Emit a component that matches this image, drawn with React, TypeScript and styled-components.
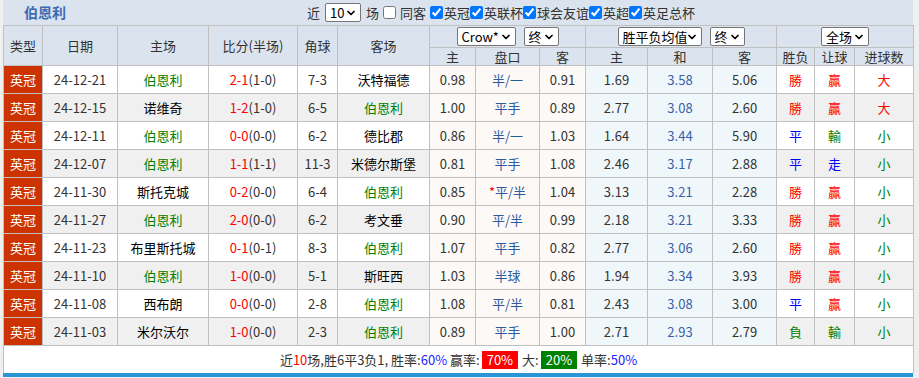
import React from "react";
import styled, { createGlobalStyle } from "styled-components";
import { ChevronDown } from "lucide-react";

const GlobalStyle = createGlobalStyle`
  html, body {
    margin: 0;
    padding: 0;
    background: #efefef;
  }
  body {
    font-family: "Noto Sans CJK SC", "Liberation Sans", sans-serif;
    font-size: 13px;
    color: #333;
  }
`;

const Panel = styled.div`
  width: 910px;
  margin-left: 3px;
  background: #dbe4ee;
`;

const TitleBar = styled.div`
  display: flex;
  align-items: center;
  height: 25px;
  padding-left: 21px;
`;

const Title = styled.div`
  width: 283px;
  font-size: 14px;
  font-weight: bold;
  color: #3c69b2;
  line-height: 25px;
`;

const Filters = styled.div`
  display: flex;
  align-items: center;
  font-size: 13px;
  color: #333;
  white-space: nowrap;
`;

const Check = styled.input.attrs({ type: "checkbox" })<{ $gap?: number }>`
  width: 13px;
  height: 13px;
  margin: 0 1px 0 ${(p) => p.$gap ?? 0}px;
`;

const SelectWrap = styled.span<{ $gap?: number }>`
  position: relative;
  display: inline-flex;
  margin: 0 ${(p) => p.$gap ?? 4}px;
`;

const NativeSelect = styled.select<{ $w: number }>`
  appearance: none;
  width: ${(p) => p.$w}px;
  height: 19px;
  padding: 0 14px 0 4px;
  font-family: "Noto Sans CJK SC", "Liberation Sans", sans-serif;
  font-size: 13px;
  line-height: 17px;
  color: #000;
  background: #fff;
  border: 1px solid #767676;
  border-radius: 2px;
`;

const Caret = styled(ChevronDown)`
  position: absolute;
  right: 4px;
  top: 50%;
  transform: translateY(-50%);
  pointer-events: none;
  color: #000;
`;

const Dropdown = ({ w, value, gap }: { w: number; value: string; gap?: number }) => (
  <SelectWrap $gap={gap}>
    <NativeSelect $w={w} defaultValue={value}>
      <option>{value}</option>
    </NativeSelect>
    <Caret size={12} strokeWidth={3.5} />
  </SelectWrap>
);

const Table = styled.table`
  width: 910px;
  table-layout: fixed;
  border-collapse: collapse;
  font-size: 13px;
`;

const Th = styled.th<{ $h?: number }>`
  height: ${(p) => p.$h ?? 17}px;
  padding: 0;
  border: 1px solid #c0c0c0;
  font-weight: normal;
  line-height: 16px;
  color: #333;
  text-align: center;
  background: #dbe4ee;
`;

const GroupBox = styled.div`
  display: flex;
  justify-content: center;
  align-items: center;
`;

const Row = styled.tr<{ $alt: boolean }>`
  background: ${(p) => (p.$alt ? "#f0f0f0" : "#fff")};
`;

type Tone = "odds" | "euro" | undefined;

const Td = styled.td<{ $tone?: Tone; $color?: string }>`
  height: 27px;
  padding: 0;
  border: 1px solid #c0c0c0;
  line-height: 18px;
  text-align: center;
  white-space: nowrap;
  color: ${(p) => p.$color ?? "#333"};
  background: ${(p) =>
    p.$tone === "odds" ? "#fdf9f6" : p.$tone === "euro" ? "#f0f7fb" : "transparent"};
`;

const TypeCell = styled.td`
  height: 27px;
  padding: 0;
  border: 1px solid #c0c0c0;
  line-height: 18px;
  text-align: center;
  color: #fff;
  background: #cc3300;
`;

const Score = styled.span`
  color: #f00;
`;

const Star = styled.span`
  color: #f00;
`;

const FootCell = styled.td`
  height: 27px;
  padding: 0;
  border: 1px solid #c0c0c0;
  border-bottom: none;
  line-height: 18px;
  background: #fff;
  text-align: center;
  color: #333;
`;

const Red = styled.span`
  color: #f00;
`;

const Blue = styled.span`
  color: #22f;
`;

const Badge = styled.span<{ $bg: string }>`
  display: inline-block;
  padding: 0 5px;
  line-height: 18px;
  color: #fff;
  background: ${(p) => p.$bg};
  margin: 0 4px 0 2px;
`;

const BottomBar = styled.div`
  height: 4px;
  background: #2a95d5;
`;

const HOME = "伯恩利";

const resultColor: Record<string, string> = {
  勝: "#f00",
  贏: "#f00",
  大: "#f00",
  平: "#00f",
  走: "#00f",
  負: "#008000",
  輸: "#008000",
  小: "#008000",
};

const matches = [
  ["24-12-21", "伯恩利", "2-1", "1-0", "7-3", "沃特福德", "0.98", "半/一", "0.91", "1.69", "3.58", "5.06", "勝", "贏", "大"],
  ["24-12-15", "诺维奇", "1-2", "1-0", "6-5", "伯恩利", "1.00", "平手", "0.89", "2.77", "3.08", "2.60", "勝", "贏", "大"],
  ["24-12-11", "伯恩利", "0-0", "0-0", "6-2", "德比郡", "0.86", "半/一", "1.03", "1.64", "3.44", "5.90", "平", "輸", "小"],
  ["24-12-07", "伯恩利", "1-1", "1-1", "11-3", "米德尔斯堡", "0.81", "平手", "1.08", "2.46", "3.17", "2.88", "平", "走", "小"],
  ["24-11-30", "斯托克城", "0-2", "0-0", "6-4", "伯恩利", "0.85", "*平/半", "1.04", "3.13", "3.21", "2.28", "勝", "贏", "小"],
  ["24-11-27", "伯恩利", "2-0", "0-0", "6-2", "考文垂", "0.90", "平/半", "0.99", "2.18", "3.21", "3.33", "勝", "贏", "小"],
  ["24-11-23", "布里斯托城", "0-1", "0-1", "8-3", "伯恩利", "1.07", "平手", "0.82", "2.77", "3.06", "2.60", "勝", "贏", "小"],
  ["24-11-10", "伯恩利", "1-0", "0-0", "5-1", "斯旺西", "1.03", "半球", "0.86", "1.94", "3.34", "3.93", "勝", "贏", "小"],
  ["24-11-08", "西布朗", "0-0", "0-0", "2-8", "伯恩利", "1.08", "平/半", "0.81", "2.43", "3.08", "3.00", "平", "贏", "小"],
  ["24-11-03", "米尔沃尔", "1-0", "0-0", "2-3", "伯恩利", "0.89", "平手", "1.00", "2.71", "2.93", "2.79", "負", "輸", "小"],
];

const widths = [39, 75, 91, 89, 40, 92, 46, 64, 46, 62, 65, 64, 38, 40, 59];

const teamColor = (name: string) => (name === HOME ? "#008000" : "#000");

const App = () => {
  return (
    <>
      <GlobalStyle />
      <Panel>
        <TitleBar>
          <Title>伯恩利</Title>
          <Filters>
            近
            <Dropdown w={36} value="10" gap={5} />
            场
            <Check $gap={4} />
            &nbsp;同客
            <Check $gap={4} defaultChecked />
            英冠
            <Check defaultChecked />
            英联杯
            <Check defaultChecked />
            球会友谊
            <Check defaultChecked />
            英超
            <Check defaultChecked />
            英足总杯
          </Filters>
        </TitleBar>
        <Table>
          <colgroup>
            {widths.map((w, i) => (
              <col key={i} style={{ width: w }} />
            ))}
          </colgroup>
          <thead>
            <tr>
              <Th rowSpan={2} $h={21}>类型</Th>
              <Th rowSpan={2}>日期</Th>
              <Th rowSpan={2}>主场</Th>
              <Th rowSpan={2}>比分(半场)</Th>
              <Th rowSpan={2}>角球</Th>
              <Th rowSpan={2}>客场</Th>
              <Th colSpan={3} $h={21}>
                <GroupBox>
                  <Dropdown w={59} value="Crow*" />
                  <Dropdown w={35} value="终" />
                </GroupBox>
              </Th>
              <Th colSpan={3} $h={21}>
                <GroupBox>
                  <Dropdown w={84} value="胜平负均值" />
                  <Dropdown w={35} value="终" />
                </GroupBox>
              </Th>
              <Th colSpan={3} $h={21}>
                <GroupBox>
                  <Dropdown w={48} value="全场" />
                </GroupBox>
              </Th>
            </tr>
            <tr>
              <Th>主</Th>
              <Th>盘口</Th>
              <Th>客</Th>
              <Th>主</Th>
              <Th>和</Th>
              <Th>客</Th>
              <Th>胜负</Th>
              <Th>让球</Th>
              <Th>进球数</Th>
            </tr>
          </thead>
          <tbody>
            {matches.map((m, i) => {
              const [date, home, score, half, corner, away, o1, line, o2, e1, ed, e2, r1, r2, r3] = m;
              const star = line.startsWith("*");
              return (
                <Row key={date} $alt={i % 2 === 1}>
                  <TypeCell>英冠</TypeCell>
                  <Td>{date}</Td>
                  <Td $color={teamColor(home)}>{home}</Td>
                  <Td>
                    <Score>{score}</Score>({half})
                  </Td>
                  <Td>{corner}</Td>
                  <Td $color={teamColor(away)}>{away}</Td>
                  <Td $tone="odds">{o1}</Td>
                  <Td $tone="odds" $color="#2c5aa0">
                    {star && <Star>*</Star>}
                    {star ? line.slice(1) : line}
                  </Td>
                  <Td $tone="odds">{o2}</Td>
                  <Td $tone="euro">{e1}</Td>
                  <Td $tone="euro" $color="#3a5fa8">{ed}</Td>
                  <Td $tone="euro">{e2}</Td>
                  <Td $color={resultColor[r1]}>{r1}</Td>
                  <Td $color={resultColor[r2]}>{r2}</Td>
                  <Td $color={resultColor[r3]}>{r3}</Td>
                </Row>
              );
            })}
            <tr>
              <FootCell colSpan={15}>
                近<Red>10</Red>场,胜6平3负1, 胜率:<Blue>60%</Blue> 赢率:
                <Badge $bg="#f00">70%</Badge>大:
                <Badge $bg="#008000">20%</Badge>单率:<Blue>50%</Blue>
              </FootCell>
            </tr>
          </tbody>
        </Table>
        <BottomBar />
      </Panel>
    </>
  );
};

export default App;
